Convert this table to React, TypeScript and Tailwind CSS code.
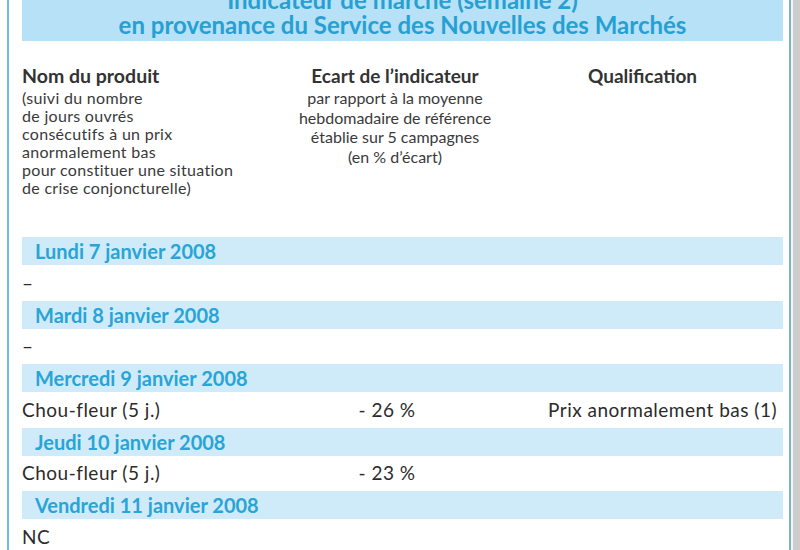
const days = [
  { label: "Lundi 7 janvier 2008", rows: [{ name: "–" }] },
  { label: "Mardi 8 janvier 2008", rows: [{ name: "–" }] },
  {
    label: "Mercredi 9 janvier 2008",
    rows: [{ name: "Chou-fleur (5 j.)", ecart: "- 26 %", qualif: "Prix anormalement bas (1)" }],
  },
  { label: "Jeudi 10 janvier 2008", rows: [{ name: "Chou-fleur (5 j.)", ecart: "- 23 %" }] },
  { label: "Vendredi 11 janvier 2008", rows: [{ name: "NC" }] },
]

const nomLines = [
  "(suivi du nombre",
  "de jours ouvrés",
  "consécutifs à un prix",
  "anormalement bas",
  "pour constituer une situation",
  "de crise conjoncturelle)",
]

const ecartLines = [
  "par rapport à la moyenne",
  "hebdomadaire de référence",
  "établie sur 5 campagnes",
  "(en % d’écart)",
]

export default function App() {
  return (
    <div className="w-[800px] h-[550px] overflow-hidden flex bg-white font-['Lato','Liberation_Sans',sans-serif]">
      {/* bord gauche */}
      <div className="w-[7px] shrink-0" />
      <div className="w-[2px] shrink-0 bg-[#6cc0df]" />
      <div className="w-[13px] shrink-0" />

      <div className="w-[761px] shrink-0 flex flex-col">
        {/* titre */}
        <div className="h-[41px] shrink-0 overflow-hidden bg-[#b6e1f6] text-center text-[24px] leading-[25px] font-bold text-[#26a0d4]">
          <div className="mt-[-13px]">
            <div>Indicateur de marché (semaine 2)</div>
            <div>en provenance du Service des Nouvelles des Marchés</div>
          </div>
        </div>

        {/* en-tête des colonnes */}
        <div className="h-[196px] shrink-0 grid grid-cols-[266px_214px_1fr] pt-[25px] text-[#333]">
          <div>
            <div className="text-[19.5px] leading-[20px] font-bold">Nom du produit</div>
            <div className="mt-[3px] text-[16px] leading-[18px] tracking-[0.3px] text-[#3a3a3a]">
              {nomLines.map((l) => (
                <div key={l}>{l}</div>
              ))}
            </div>
          </div>
          <div className="text-center">
            <div className="text-[19px] leading-[20px] font-bold">Ecart de l’indicateur</div>
            <div className="mt-[2px] text-[16px] leading-[19.5px] text-[#3a3a3a]">
              {ecartLines.map((l) => (
                <div key={l}>{l}</div>
              ))}
            </div>
          </div>
          <div className="text-center">
            <div className="text-[19px] leading-[20px] font-bold">Qualification</div>
          </div>
        </div>

        {/* jours */}
        {days.map((day) => (
          <div key={day.label}>
            <div className="h-[28px] flex items-center pl-[13px] bg-[#cfebf9] text-[20px] font-bold text-[#29a4d6]">
              {day.label}
            </div>
            {day.rows.map((row, i) => (
              <div
                key={i}
                className="h-[35.5px] grid grid-cols-[318px_94px_1fr] items-center whitespace-nowrap text-[19px] tracking-[0.5px] text-[#2b2b2b]"
              >
                <div>{row.name}</div>
                <div className="text-center">{row.ecart}</div>
                <div className="pl-[114px]">{row.qualif}</div>
              </div>
            ))}
          </div>
        ))}
      </div>

      {/* bord droit */}
      <div className="w-[6px] shrink-0" />
      <div className="w-[2px] shrink-0 bg-[#7ab4c9]" />
      <div className="w-[2px] shrink-0 bg-[#f4f4f4]" />
      <div className="flex-1 bg-[#cdcdcd]" />
    </div>
  )
}
